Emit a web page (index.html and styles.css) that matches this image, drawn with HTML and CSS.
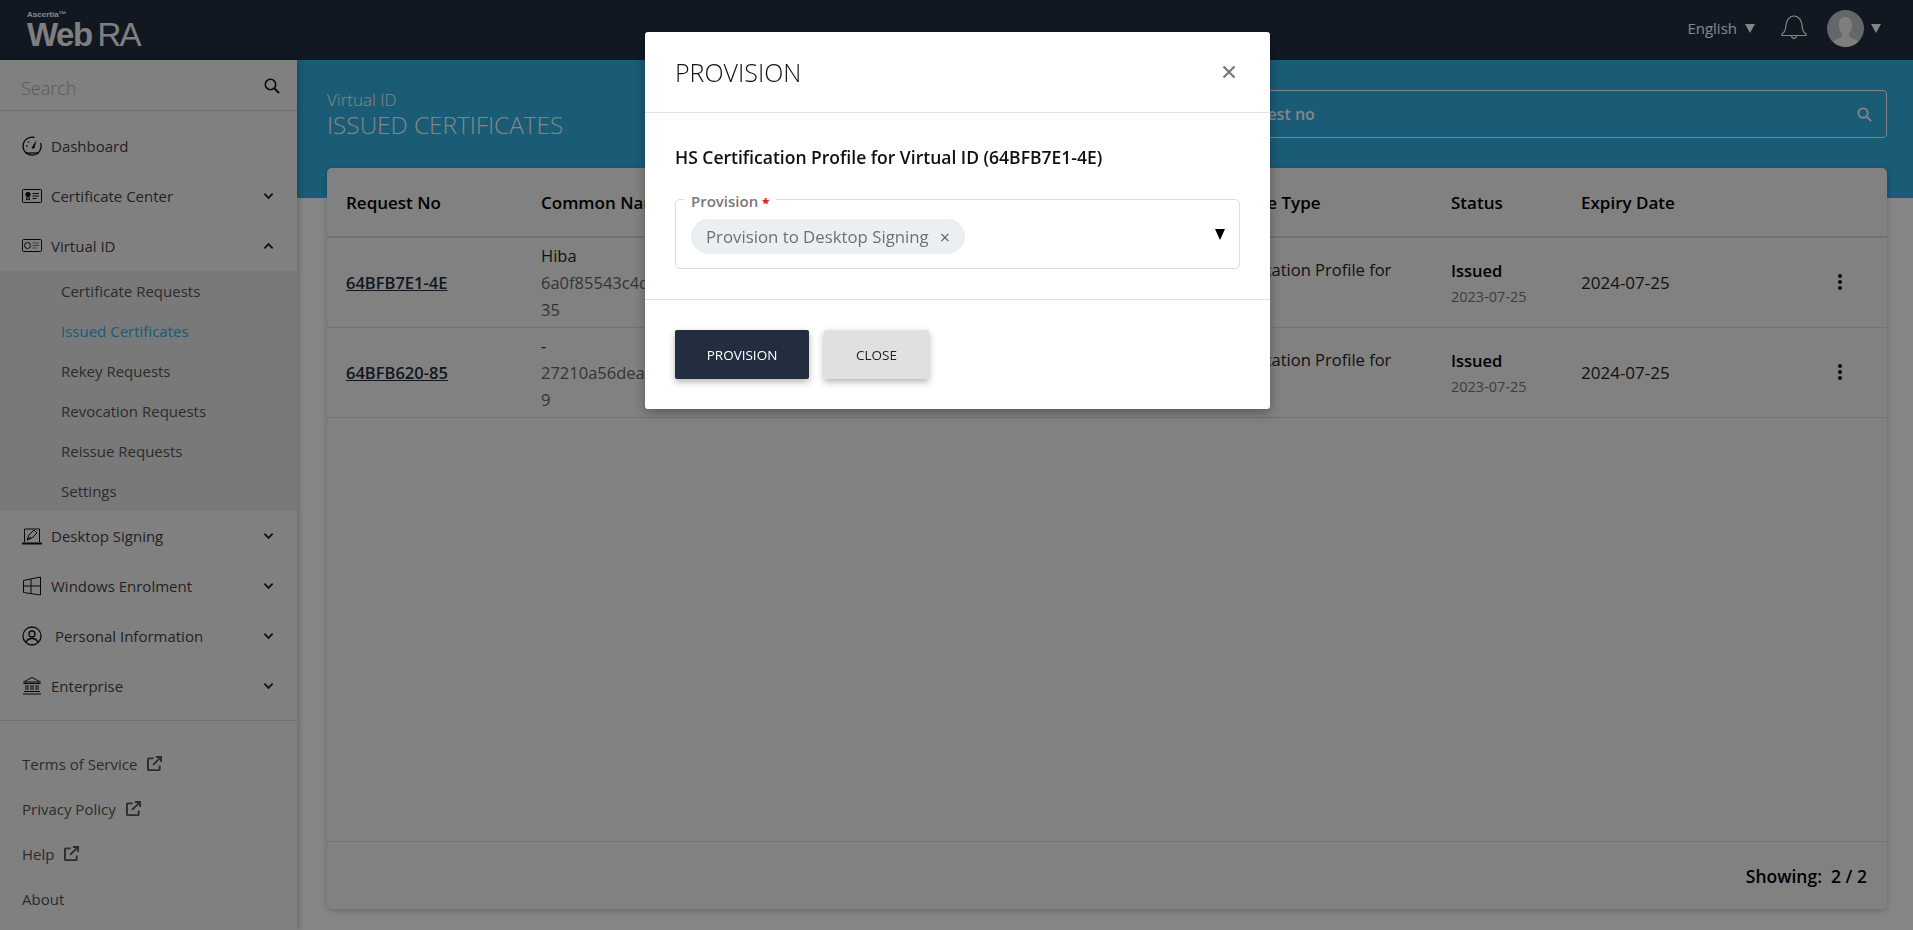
FILE: index.html
```html
<!DOCTYPE html>
<html lang="en">
<head>
    <meta charset="UTF-8">
    <meta name="viewport" content="width=device-width, initial-scale=1.0">
    <title>Issued Certificates - WebRA</title>
    <link rel="stylesheet" href="styles.css">
</head>
<body>
    <div class="topbar">
        <div class="logo">
            <span class="logo-small">Ascertia&trade;</span>
            <span class="logo-name">Web<span class="logo-ra">RA</span></span>
        </div>
        <div class="top-right">
            <span class="lang">English</span>
            <span class="caret"></span>
            <svg class="bell" viewBox="0 0 26 26" fill="none" stroke="currentColor" stroke-width="1.2">
                <path d="M1 20.5h24v-1.6c-2.600-1.600-3.600-4-3.800-7.400C21 6 18 1 13 1S5 6 4.800 11.500C4.600 14.900 3.600 17.300 1 18.900z"/>
                <path d="M10.500 20.800a2.500 2.500 0 0 0 5 0"/>
            </svg>
            <span class="avatar">
                <svg viewBox="0 0 37 37">
                    <path fill="#f2f2f2" d="M5 33c2-4 8-4.500 10-6.500v-3c-2-2-3-5-3-8.500 0-5 2.500-8 6.500-8s6.500 3 6.500 8c0 3.500-1 6.500-3 8.500v3c2 2 8 2.500 10 6.500a18.500 18.500 0 0 1-27 0z"/>
                </svg>
            </span>
            <span class="caret"></span>
        </div>
    </div>

    <div class="layout">
        <div class="sidebar">
            <div class="side-search">
                <span>Search</span>
                <svg class="side-search-icon" viewBox="0 0 16 16" fill="none" stroke="currentColor" stroke-width="1.600">
                    <circle cx="6.500" cy="6.500" r="5.200"/>
                    <path d="M10.400 10.400L15 15" stroke-width="2"/>
                </svg>
            </div>

            <div class="menu">
                <a class="menu-item">
                    <svg class="menu-icon" viewBox="0 0 20 20" fill="none" stroke="currentColor" stroke-width="1.300">
                        <path d="M12.500 1.500A9 9 0 1 0 18.500 7"/>
                        <path d="M3 17h14"/>
                        <path d="M9.500 12l5-8-2 8a2.600 2.600 0 0 1-3 0z" fill="currentColor" stroke="none"/>
                        <path d="M4 10h1.500M6 5.500l1 1"/>
                    </svg>
                    Dashboard
                </a>
                <a class="menu-item">
                    <svg class="menu-icon" viewBox="0 0 20 20" fill="none" stroke="currentColor" stroke-width="1">
                        <rect x="0.500" y="3.500" width="19" height="13" rx="1"/>
                        <circle cx="6" cy="8.500" r="2.200" fill="currentColor"/>
                        <path d="M5 11l-.6 3 1.600-1 1.600 1-.6-3M10.500 7.500h6.500M10.500 10h6.500M10.500 12.500h4"/>
                    </svg>
                    Certificate Center
                    <svg class="chevron" viewBox="0 0 12 8" fill="none" stroke="currentColor" stroke-width="2"><path d="M1.500 1.500L6 6l4.500-4.500"/></svg>
                </a>
                <a class="menu-item">
                    <svg class="menu-icon" viewBox="0 0 20 20" fill="none" stroke="currentColor" stroke-width="1">
                        <rect x="0.500" y="3.500" width="19" height="12" rx="1"/>
                        <circle cx="5.500" cy="9.500" r="3"/>
                        <path d="M10.500 7h6.500M10.500 9.500h6.500M10.500 12h4" stroke="#777"/>
                    </svg>
                    Virtual ID
                    <svg class="chevron" viewBox="0 0 12 8" fill="none" stroke="currentColor" stroke-width="2"><path d="M1.500 6.500L6 2l4.500 4.500"/></svg>
                </a>
                <div class="submenu">
                    <a class="submenu-item">Certificate Requests</a>
                    <a class="submenu-item active">Issued Certificates</a>
                    <a class="submenu-item">Rekey Requests</a>
                    <a class="submenu-item">Revocation Requests</a>
                    <a class="submenu-item">Reissue Requests</a>
                    <a class="submenu-item">Settings</a>
                </div>
                <a class="menu-item">
                    <svg class="menu-icon" viewBox="0 0 20 20" fill="none" stroke="currentColor" stroke-width="1">
                        <path d="M2.500 16V3h15v13"/>
                        <path d="M0 17.500h20" stroke-width="2"/>
                        <path d="M5 14l2-5 5-5 3 3-5 5z"/>
                        <path d="M5 14l4-3"/>
                    </svg>
                    Desktop Signing
                    <svg class="chevron" viewBox="0 0 12 8" fill="none" stroke="currentColor" stroke-width="2"><path d="M1.500 1.500L6 6l4.500-4.500"/></svg>
                </a>
                <a class="menu-item">
                    <svg class="menu-icon" viewBox="0 0 20 20" fill="none" stroke="currentColor" stroke-width="1">
                        <path d="M1.500 4.500L18.500 1v18L1.500 16.500zM1.500 10h17M9 3v15"/>
                    </svg>
                    Windows Enrolment
                    <svg class="chevron" viewBox="0 0 12 8" fill="none" stroke="currentColor" stroke-width="2"><path d="M1.500 1.500L6 6l4.500-4.500"/></svg>
                </a>
                <a class="menu-item item-personal">
                    <svg class="menu-icon" viewBox="0 0 20 20" fill="none" stroke="currentColor" stroke-width="1.300">
                        <circle cx="10" cy="10" r="9"/>
                        <circle cx="10" cy="8" r="3"/>
                        <path d="M4 16.500c1-3 3.500-4 6-4s5 1 6 4"/>
                    </svg>
                    Personal Information
                    <svg class="chevron" viewBox="0 0 12 8" fill="none" stroke="currentColor" stroke-width="2"><path d="M1.500 1.500L6 6l4.500-4.500"/></svg>
                </a>
                <a class="menu-item">
                    <svg class="menu-icon" viewBox="0 0 20 20" fill="none" stroke="currentColor" stroke-width="1">
                        <path d="M1.500 6L10 1.500 18.500 6zM1.500 7.500h17M2 15.500h16M1 18h18"/>
                        <path d="M4 9v5M6 9v5M9 9v5M11 9v5M14 9v5M16 9v5"/>
                    </svg>
                    Enterprise
                    <svg class="chevron" viewBox="0 0 12 8" fill="none" stroke="currentColor" stroke-width="2"><path d="M1.500 1.500L6 6l4.500-4.500"/></svg>
                </a>
            </div>

            <div class="side-links">
                <a class="side-link">Terms of Service
                    <svg class="ext" viewBox="0 0 16 16" fill="none" stroke="currentColor" stroke-width="2"><path d="M7 2.500H2a1 1 0 0 0-1 1V14a1 1 0 0 0 1 1h10.500a1 1 0 0 0 1-1V10M6.500 9.500L14 2M9.500 1H15v5.500"/></svg>
                </a>
                <a class="side-link">Privacy Policy
                    <svg class="ext" viewBox="0 0 16 16" fill="none" stroke="currentColor" stroke-width="2"><path d="M7 2.500H2a1 1 0 0 0-1 1V14a1 1 0 0 0 1 1h10.500a1 1 0 0 0 1-1V10M6.500 9.500L14 2M9.500 1H15v5.500"/></svg>
                </a>
                <a class="side-link">Help
                    <svg class="ext" viewBox="0 0 16 16" fill="none" stroke="currentColor" stroke-width="2"><path d="M7 2.500H2a1 1 0 0 0-1 1V14a1 1 0 0 0 1 1h10.500a1 1 0 0 0 1-1V10M6.500 9.500L14 2M9.500 1H15v5.500"/></svg>
                </a>
                <a class="side-link">About</a>
            </div>
        </div>

        <div class="main">
            <div class="band">
                <div class="band-title">
                    <div class="band-sub">Virtual ID</div>
                    <div class="band-head">ISSUED CERTIFICATES</div>
                </div>
                <div class="band-search">
                    <span>Search by request no</span>
                    <svg class="band-search-icon" viewBox="0 0 16 16" fill="none" stroke="currentColor" stroke-width="2">
                        <circle cx="6.500" cy="6.500" r="5"/>
                        <path d="M10.300 10.300L15 15"/>
                    </svg>
                </div>
            </div>

            <div class="card">
                <table class="cert-table">
                    <thead>
                        <tr>
                            <th class="col-no">Request No</th>
                            <th class="col-name">Common Name</th>
                            <th class="col-type">Certificate Type</th>
                            <th class="col-status">Status</th>
                            <th class="col-expiry">Expiry Date</th>
                            <th></th>
                        </tr>
                    </thead>
                    <tbody>
                        <tr>
                            <td><a class="req-link">64BFB7E1-4E</a></td>
                            <td class="cell-name">
                                <div class="name-main">Hiba</div>
                                <div class="name-hash">6a0f85543c4d7e21b9a6c03f5d18e47ab2c6f9<br>35</div>
                            </td>
                            <td>HS Certification Profile for Virtual ID</td>
                            <td><div class="status">Issued</div><div class="status-date">2023-07-25</div></td>
                            <td class="cell-expiry">2024-07-25</td>
                            <td class="cell-menu"><span class="dots"><i></i><i></i><i></i></span></td>
                        </tr>
                        <tr>
                            <td><a class="req-link">64BFB620-85</a></td>
                            <td class="cell-name">
                                <div class="name-main">-</div>
                                <div class="name-hash">27210a56dea4c8f1037be92d6a51fc08e3b7d64<br>9</div>
                            </td>
                            <td>HS Certification Profile for Virtual ID</td>
                            <td><div class="status">Issued</div><div class="status-date">2023-07-25</div></td>
                            <td class="cell-expiry">2024-07-25</td>
                            <td class="cell-menu"><span class="dots"><i></i><i></i><i></i></span></td>
                        </tr>
                    </tbody>
                </table>
                <div class="card-footer">Showing:&nbsp; 2 / 2</div>
            </div>
        </div>
    </div>

    <div class="backdrop"></div>

    <div class="modal">
        <div class="modal-header">
            <span class="modal-title">PROVISION</span>
            <svg class="modal-close" viewBox="0 0 14 14" fill="none" stroke="currentColor" stroke-width="2.200"><path d="M1.500 1.500l11 11M12.500 1.500l-11 11"/></svg>
        </div>
        <div class="modal-body">
            <div class="modal-sub">HS Certification Profile for Virtual ID (64BFB7E1-4E)</div>
            <div class="field">
                <span class="field-label">Provision <b>*</b></span>
                <span class="chip">Provision to Desktop Signing <span class="chip-x">&times;</span></span>
                <span class="field-arrow"></span>
            </div>
        </div>
        <div class="modal-footer">
            <button class="btn btn-dark">PROVISION</button>
            <button class="btn btn-light">CLOSE</button>
        </div>
    </div>
</body>
</html>
```

FILE: styles.css
```css
* {
    box-sizing: border-box;
}
html, body {
    height: 100%;
}
body {
    margin: 0;
    overflow: hidden;
    font-family: "Open Sans", sans-serif;
    font-size: 15px;
    color: #212529;
    background-color: #fff;
    display: flex;
    flex-direction: column;
}

/* top bar */
.topbar {
    height: 60px;
    flex-shrink: 0;
    background-color: #212f41;
    color: #fff;
    display: flex;
    justify-content: space-between;
    align-items: center;
    padding: 0 32px 0 27px;
}
.logo {
    display: flex;
    flex-direction: column;
    line-height: 1;
    padding-top: 1px;
}
.logo-small {
    font-family: "Liberation Sans", sans-serif;
    font-size: 8px;
    font-weight: bold;
    line-height: 9px;
    height: 9px;
}
.logo-name {
    font-family: "Liberation Sans", sans-serif;
    font-size: 33px;
    font-weight: 700;
    line-height: 32px;
    letter-spacing: -1.500px;
    color: #f4f4f4;
}
.logo-ra {
    font-weight: 400;
    margin-left: 6px;
    letter-spacing: -2px;
}
.top-right {
    display: flex;
    align-items: center;
    padding-bottom: 4px;
}
.lang {
    font-size: 15px;
    margin-right: 8px;
}
.caret {
    width: 0;
    height: 0;
    border-left: 5px solid transparent;
    border-right: 5px solid transparent;
    border-top: 9px solid #fff;
}
.bell {
    width: 26px;
    height: 26px;
    margin: 0 20px 0 26px;
}
.avatar {
    width: 37px;
    height: 37px;
    border-radius: 50%;
    background-color: #c0c6cb;
    margin-right: 7px;
    overflow: hidden;
}
.avatar svg {
    display: block;
    width: 37px;
    height: 37px;
}

/* sidebar */
.layout {
    flex: 1;
    display: flex;
    min-height: 0;
}
.sidebar {
    width: 297px;
    flex-shrink: 0;
    background-color: #f6f6f6;
    box-shadow: 2px 0 6px rgba(0, 0, 0, 0.2);
    display: flex;
    flex-direction: column;
    position: relative;
}
.side-search {
    height: 51px;
    border-bottom: 1px solid #d5d5d5;
    display: flex;
    justify-content: space-between;
    align-items: center;
    padding: 5px 17px 0 21px;
    font-size: 18px;
    font-weight: 300;
    color: #aaa;
}
.side-search-icon {
    width: 16px;
    height: 16px;
    color: #111;
    margin-top: -4px;
}
.menu {
    padding-top: 10px;
    border-bottom: 1px solid #d5d5d5;
    padding-bottom: 9px;
}
.menu-item {
    height: 50px;
    display: flex;
    align-items: center;
    padding: 0 22px;
    font-size: 15px;
    color: #444;
}
.menu-icon {
    width: 20px;
    height: 20px;
    margin-right: 9px;
    color: #111;
    flex-shrink: 0;
}
.item-personal .menu-icon {
    margin-right: 13px;
}
.chevron {
    width: 11px;
    height: 8px;
    margin-left: auto;
    margin-right: 1px;
    color: #222;
}
.submenu {
    background-color: #e8e8e8;
    padding: 0 0 0 61px;
}
.submenu-item {
    display: flex;
    align-items: center;
    height: 40px;
    font-size: 15px;
    color: #555;
}
.submenu-item.active {
    color: #32afe1;
}
.side-links {
    padding: 20px 22px 0;
}
.side-link {
    display: flex;
    align-items: center;
    height: 45px;
    font-size: 15px;
    color: #555;
}
.ext {
    width: 15px;
    height: 15px;
    margin-left: 10px;
    color: #555;
}

/* main */
.main {
    flex: 1;
    min-width: 0;
    background-color: #fff;
    display: flex;
    flex-direction: column;
    padding-bottom: 21px;
}
.band {
    height: 138px;
    margin-bottom: -30px;
    flex-shrink: 0;
    background-color: #32afe1;
    color: #fff;
    display: flex;
    justify-content: space-between;
    align-items: flex-start;
    padding: 30px 26px 0 30px;
}
.band-sub {
    font-size: 17px;
    font-weight: 300;
    line-height: 20px;
}
.band-head {
    font-size: 24.300px;
    font-weight: 300;
    line-height: 30px;
}
.band-search {
    width: 760px;
    height: 48px;
    border: 1px solid #fff;
    border-radius: 4px;
    display: flex;
    justify-content: space-between;
    align-items: center;
    padding: 0 14px 0 24px;
    font-weight: 600;
    font-size: 16px;
}
.band-search-icon {
    width: 15px;
    height: 15px;
}
.card {
    flex: 1;
    margin: 0 26px 0 30px;
    background-color: #f7f7f7;
    border-radius: 5px;
    box-shadow: 0 2px 6px rgba(0, 0, 0, 0.2);
    display: flex;
    flex-direction: column;
    position: relative;
}
.cert-table {
    width: 100%;
    table-layout: fixed;
    border-collapse: collapse;
}
.cert-table th {
    height: 69px;
    padding: 0 0 0 19px;
    text-align: left;
    font-weight: 600;
    font-size: 17px;
    color: #000;
    border-bottom: 2px solid #d8d8d8;
}
.col-no { width: 195px; }
.col-name { width: 651px; }
.col-type { width: 259px; }
.col-status { width: 130px; }
.col-expiry { width: 230px; }
.cert-table td {
    height: 90px;
    padding: 1px 0 0 19px;
    font-size: 16.500px;
    line-height: 26px;
    color: #212529;
    border-bottom: 1px solid #dcdcdc;
    vertical-align: middle;
}
.cert-table td.cell-name {
    line-height: 27px;
}
.cert-table td.cell-expiry {
    font-size: 17px;
}
.req-link {
    font-weight: 600;
    font-size: 16.500px;
    color: #222d3f;
    text-decoration: underline;
}
.name-hash {
    color: #666;
}
.status {
    font-weight: 600;
    color: #000;
    line-height: 28px;
}
.status-date {
    font-size: 14.500px;
    color: #777;
    line-height: 24px;
}
.cert-table td.cell-menu {
    padding-left: 0;
}
.dots {
    display: flex;
    flex-direction: column;
    gap: 2px;
    margin-left: 46px;
    margin-bottom: 2px;
}
.dots i {
    display: block;
    width: 4px;
    height: 4px;
    border-radius: 50%;
    background-color: #111;
}
.card-footer {
    position: absolute;
    left: 0;
    right: 0;
    bottom: 0;
    height: 68px;
    border-top: 1px solid #dcdcdc;
    text-align: right;
    padding: 22px 20px 0 0;
    font-weight: 600;
    font-size: 17.500px;
    color: #000;
}

/* modal */
.backdrop {
    position: fixed;
    inset: 0;
    background-color: rgba(0, 0, 0, 0.48);
}
.modal {
    position: fixed;
    top: 32px;
    left: 645px;
    width: 625px;
    height: 377px;
    background-color: #fff;
    border-radius: 3px;
    box-shadow: 0 4px 12px rgba(0, 0, 0, 0.3);
    display: flex;
    flex-direction: column;
}
.modal-header {
    height: 81px;
    border-bottom: 1px solid #e2e2e2;
    display: flex;
    justify-content: space-between;
    align-items: center;
    padding: 0 34px 1px 30px;
}
.modal-title {
    font-size: 25px;
    font-weight: 300;
    color: #111;
}
.modal-close {
    width: 14px;
    height: 14px;
    color: #777;
}
.modal-body {
    height: 187px;
    border-bottom: 1px solid #e2e2e2;
    padding: 32px 30px 0;
}
.modal-sub {
    font-weight: 600;
    font-size: 17.500px;
    color: #111;
    line-height: 24px;
}
.field {
    margin-top: 30px;
    height: 70px;
    border: 1px solid #dcdcdc;
    border-radius: 5px;
    position: relative;
    display: flex;
    align-items: center;
    padding: 5px 15px 0;
}
.field-label {
    position: absolute;
    top: -9px;
    left: 8px;
    padding: 0 7px;
    background-color: #fff;
    font-size: 15px;
    font-weight: 600;
    line-height: 20px;
    color: #777;
}
.field-label b {
    color: #d9232e;
    font-size: 13px;
}
.chip {
    display: flex;
    align-items: center;
    height: 35px;
    padding: 0 15px;
    background-color: #ebeff2;
    border-radius: 18px;
    font-size: 16.800px;
    color: #6b7178;
}
.chip-x {
    margin-left: 11px;
    font-size: 18px;
    color: #666;
}
.field-arrow {
    position: absolute;
    right: 14px;
    top: 29px;
    border-left: 5.500px solid transparent;
    border-right: 5.500px solid transparent;
    border-top: 11px solid #000;
}
.modal-footer {
    flex: 1;
    display: flex;
    align-items: flex-start;
    gap: 15px;
    padding: 30px 30px 0;
}
.btn {
    height: 49px;
    border: none;
    border-radius: 2px;
    font-family: "Open Sans", sans-serif;
    font-size: 13.500px;
    box-shadow: 0 3px 7px rgba(0, 0, 0, 0.3);
}
.btn-dark {
    width: 134px;
    background-color: #222d3f;
    color: #fff;
}
.btn-light {
    width: 105px;
    background-color: #e0e0e0;
    color: #222;
}
```
